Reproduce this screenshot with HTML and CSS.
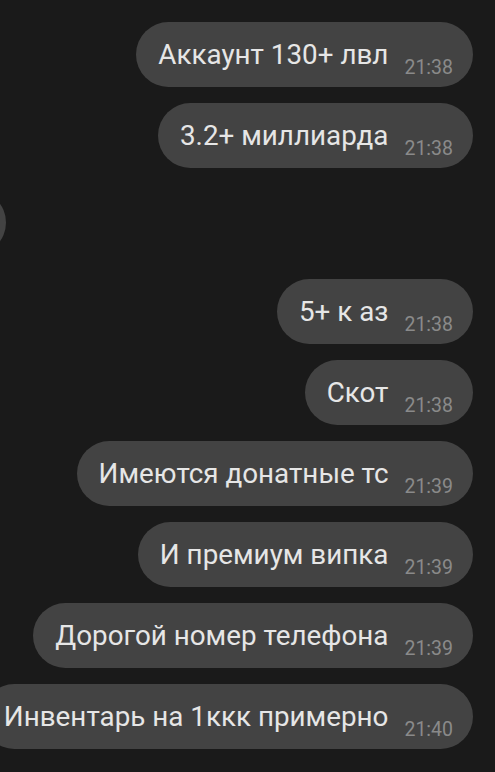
FILE: index.html
```html
<!doctype html>
<html lang="ru">
<head>
    <meta charset="UTF-8">
    <meta name="viewport" content="width=device-width, initial-scale=1.0">
    <title>Чат</title>
    <link rel="stylesheet" href="styles.css">
</head>
<body>
    <div class="chat">
        <div class="msg out"><span class="text">Аккаунт 130+ лвл</span><span class="time">21:38</span></div>
        <div class="msg out"><span class="text">3.2+ миллиарда</span><span class="time">21:38</span></div>
        <div class="msg in"></div>
        <div class="msg out"><span class="text">5+ к аз</span><span class="time">21:38</span></div>
        <div class="msg out"><span class="text">Скот</span><span class="time">21:38</span></div>
        <div class="msg out"><span class="text">Имеются донатные тс</span><span class="time">21:39</span></div>
        <div class="msg out"><span class="text">И премиум випка</span><span class="time">21:39</span></div>
        <div class="msg out"><span class="text">Дорогой номер телефона</span><span class="time">21:39</span></div>
        <div class="msg out"><span class="text">Инвентарь на 1ккк примерно</span><span class="time">21:40</span></div>
    </div>
</body>
</html>
```

FILE: styles.css
```css
* {
    margin: 0;
    padding: 0;
    box-sizing: border-box;
}
html, body {
    height: 100%;
}
body {
    font-family: Roboto, 'Noto Sans', sans-serif;
    background-color: #1a1a1a;
    overflow: hidden;
}
.chat {
    display: flex;
    flex-direction: column;
    align-items: flex-end;
    gap: 16px;
    padding: 22px 22px 0 0;
}
.msg {
    display: flex;
    align-items: center;
    height: 65px;
    padding: 0 20px 0 22px;
    border-radius: 33px;
    background-color: #434343;
    white-space: nowrap;
}
.msg.in {
    align-self: flex-start;
    width: 200px;
    margin-left: -194px;
    margin-top: 6px;
    margin-bottom: 8px;
}
.text {
    color: #e6e6e6;
    font-size: 27.8px;
}
.time {
    align-self: flex-end;
    margin-left: 16px;
    margin-bottom: 8px;
    color: #8a8a8a;
    font-size: 19.5px;
}
```
